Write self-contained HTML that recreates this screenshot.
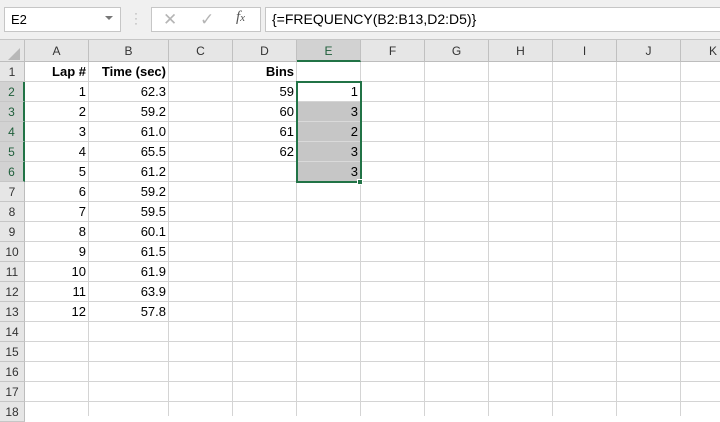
<!DOCTYPE html>
<html><head><style>
*{margin:0;padding:0;box-sizing:border-box}
body{width:720px;height:416px;overflow:hidden;background:#fff;font-family:"Liberation Sans",Arial,sans-serif;font-size:13px;color:#000;position:relative}
.a{position:absolute}
.top{left:0;top:0;width:720px;height:40px;background:#f0f0f0;border-bottom:1px solid #c6c6c6}
.box{background:#fff;border:1px solid #c6c6c6}
.ch{top:40px;height:22px;background:#e6e6e6;border-right:1px solid #c0c0c0;border-bottom:1px solid #bdbdbd;text-align:center;line-height:22px;color:#333;font-size:12px}
.rh{left:0;width:25px;height:20px;background:#e6e6e6;border-bottom:1px solid #c6c6c6;border-right:1px solid #bdbdbd;text-align:center;line-height:20px;font-size:12px;color:#333}
.vl{top:62px;width:1px;height:354px;background:#d4d4d4}
.hl{left:25px;width:695px;height:1px;background:#d4d4d4}
.c{height:20px;line-height:20px;text-align:right;padding-right:3px}
</style></head><body>
<div class="a top"></div>
<div class="a box" style="left:4px;top:7px;width:117px;height:25px;line-height:23px;padding-left:6px">E2</div>
<div class="a" style="left:105px;top:16px;width:0;height:0;border-left:4px solid transparent;border-right:4px solid transparent;border-top:4px solid #777"></div>
<div class="a" style="left:134px;top:11px;color:#aaa;font-size:12px;line-height:5px">·<br>·<br>·</div>
<div class="a box" style="left:151px;top:7px;width:110px;height:25px"></div>
<div class="a" style="left:163px;top:10px;color:#b5b5b5;font-size:17px">✕</div>
<div class="a" style="left:200px;top:10px;color:#b5b5b5;font-size:17px">✓</div>
<div class="a" style="left:236px;top:9px;color:#555;font-family:'Liberation Serif',serif;font-style:italic;font-size:15px">f<span style="font-size:11px">x</span></div>
<div class="a box" style="left:265px;top:7px;width:460px;height:25px;line-height:23px;padding-left:6px;font-size:14px">{=FREQUENCY(B2:B13,D2:D5)}</div>

<div class="a ch" style="left:0;width:25px"></div>
<div class="a" style="left:8px;top:48px;width:0;height:0;border-left:12px solid transparent;border-bottom:12px solid #b8b8b8"></div>
<div class="a ch" style="left:25px;width:64px">A</div>
<div class="a ch" style="left:89px;width:80px">B</div>
<div class="a ch" style="left:169px;width:64px">C</div>
<div class="a ch" style="left:233px;width:64px">D</div>
<div class="a ch" style="left:297px;width:64px;background:#d2d2d2;border-bottom:2px solid #217346;color:#1e5e3a">E</div>
<div class="a ch" style="left:361px;width:64px">F</div>
<div class="a ch" style="left:425px;width:64px">G</div>
<div class="a ch" style="left:489px;width:64px">H</div>
<div class="a ch" style="left:553px;width:64px">I</div>
<div class="a ch" style="left:617px;width:64px">J</div>
<div class="a ch" style="left:681px;width:64px;text-align:left;padding-left:28px">K</div>

<div class="a vl" style="left:88px"></div><div class="a vl" style="left:168px"></div><div class="a vl" style="left:232px"></div><div class="a vl" style="left:296px"></div><div class="a vl" style="left:360px"></div><div class="a vl" style="left:424px"></div><div class="a vl" style="left:488px"></div><div class="a vl" style="left:552px"></div><div class="a vl" style="left:616px"></div><div class="a vl" style="left:680px"></div>

<div class="a hl" style="top:81px"></div><div class="a hl" style="top:101px"></div><div class="a hl" style="top:121px"></div><div class="a hl" style="top:141px"></div><div class="a hl" style="top:161px"></div><div class="a hl" style="top:181px"></div><div class="a hl" style="top:201px"></div><div class="a hl" style="top:221px"></div><div class="a hl" style="top:241px"></div><div class="a hl" style="top:261px"></div><div class="a hl" style="top:281px"></div><div class="a hl" style="top:301px"></div><div class="a hl" style="top:321px"></div><div class="a hl" style="top:341px"></div><div class="a hl" style="top:361px"></div><div class="a hl" style="top:381px"></div><div class="a hl" style="top:401px"></div>

<div class="a rh" style="top:62px">1</div>
<div class="a rh" style="top:82px;background:#d2d2d2;border-right:2px solid #217346;color:#1e5e3a">2</div>
<div class="a rh" style="top:102px;background:#d2d2d2;border-right:2px solid #217346;color:#1e5e3a">3</div>
<div class="a rh" style="top:122px;background:#d2d2d2;border-right:2px solid #217346;color:#1e5e3a">4</div>
<div class="a rh" style="top:142px;background:#d2d2d2;border-right:2px solid #217346;color:#1e5e3a">5</div>
<div class="a rh" style="top:162px;background:#d2d2d2;border-right:2px solid #217346;color:#1e5e3a">6</div>
<div class="a rh" style="top:182px">7</div><div class="a rh" style="top:202px">8</div><div class="a rh" style="top:222px">9</div><div class="a rh" style="top:242px">10</div><div class="a rh" style="top:262px">11</div><div class="a rh" style="top:282px">12</div><div class="a rh" style="top:302px">13</div><div class="a rh" style="top:322px">14</div><div class="a rh" style="top:342px">15</div><div class="a rh" style="top:362px">16</div><div class="a rh" style="top:382px">17</div><div class="a rh" style="top:402px">18</div>

<div class="a" style="left:298px;top:102px;width:62px;height:80px;background:#c6c6c6"></div>
<div class="a" style="left:298px;top:121px;width:62px;height:1px;background:#dadada"></div>
<div class="a" style="left:298px;top:141px;width:62px;height:1px;background:#dadada"></div>
<div class="a" style="left:298px;top:161px;width:62px;height:1px;background:#dadada"></div>
<div class="a" style="left:296px;top:81px;width:66px;height:102px;border:2px solid #217346"></div>
<div class="a" style="left:357px;top:179px;width:6px;height:6px;background:#217346;border:1px solid #fff"></div>

<div class="a" style="left:25px;top:62px;width:64px"><div class="c" style="font-weight:bold">Lap #</div><div class="c">1</div><div class="c">2</div><div class="c">3</div><div class="c">4</div><div class="c">5</div><div class="c">6</div><div class="c">7</div><div class="c">8</div><div class="c">9</div><div class="c">10</div><div class="c">11</div><div class="c">12</div></div>
<div class="a" style="left:89px;top:62px;width:80px"><div class="c" style="font-weight:bold">Time (sec)</div><div class="c">62.3</div><div class="c">59.2</div><div class="c">61.0</div><div class="c">65.5</div><div class="c">61.2</div><div class="c">59.2</div><div class="c">59.5</div><div class="c">60.1</div><div class="c">61.5</div><div class="c">61.9</div><div class="c">63.9</div><div class="c">57.8</div></div>
<div class="a" style="left:233px;top:62px;width:64px"><div class="c" style="font-weight:bold">Bins</div><div class="c">59</div><div class="c">60</div><div class="c">61</div><div class="c">62</div></div>
<div class="a" style="left:297px;top:62px;width:64px"><div class="c"></div><div class="c">1</div><div class="c">3</div><div class="c">2</div><div class="c">3</div><div class="c">3</div></div>
</body></html>
